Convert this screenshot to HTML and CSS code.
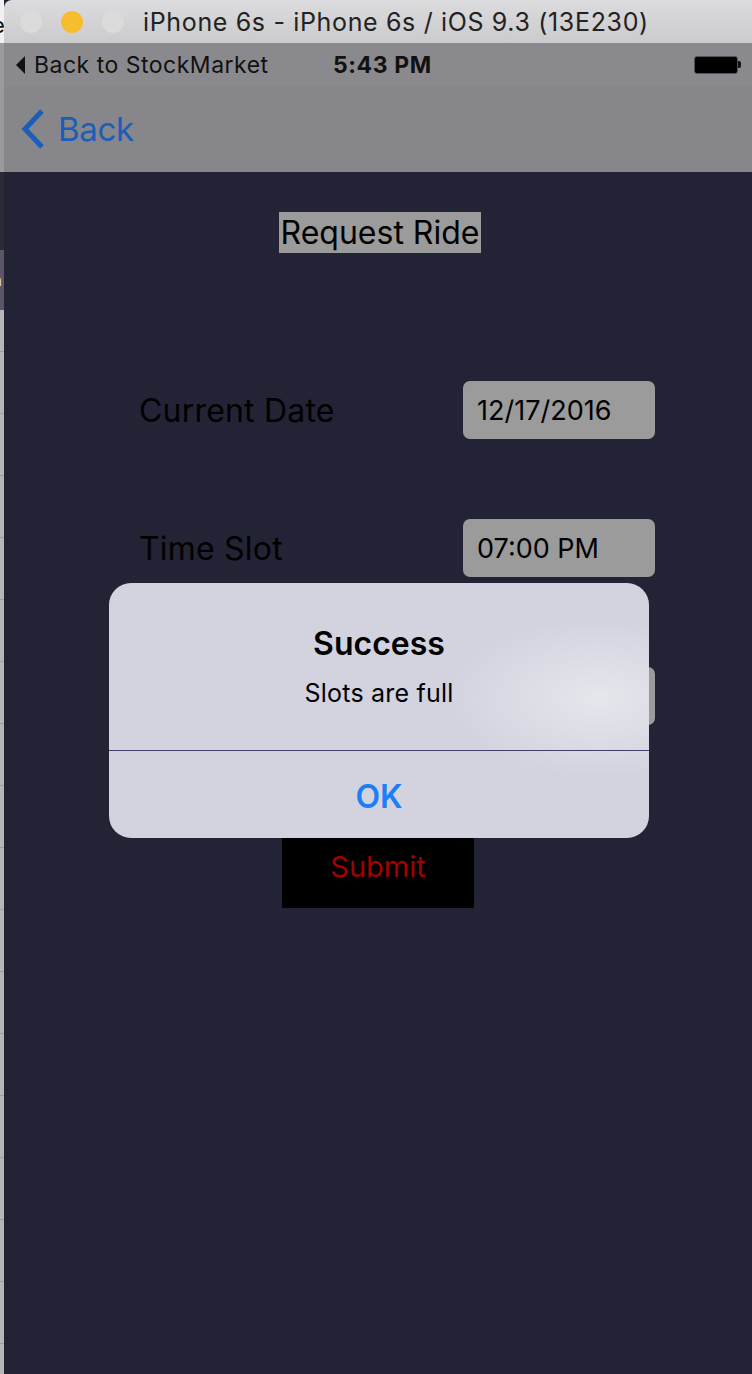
FILE: index.html
```html
<!DOCTYPE html>
<html>
<head>
<meta charset="utf-8">
<link rel="stylesheet" href="styles.css">
</head>
<body>
<div class="desk">
  <div class="behind">
    <div class="b-top"><span class="b-char">e</span></div>
    <div class="b-gray"></div>
    <div class="b-dark"></div>
    <div class="b-purple"><span class="b-char2">a</span></div>
    <div class="b-list"></div>
  </div>
  <div class="sim">
    <div class="titlebar">
      <div class="lights">
        <span class="light gray"></span>
        <span class="light yellow"></span>
        <span class="light gray"></span>
      </div>
      <div class="title">iPhone 6s - iPhone 6s / iOS 9.3 (13E230)</div>
    </div>
    <div class="phone">
      <div class="statusbar">
        <div class="sb-left"><span class="tri"></span>Back to StockMarket</div>
        <div class="sb-time">5:43 PM</div>
        <div class="battery"><span class="bat-body"></span><span class="bat-tip"></span></div>
      </div>
      <div class="navbar">
        <svg class="chev" width="30" height="42" viewBox="0 0 30 42"><path d="M24 3 L7 21 L24 39" fill="none" stroke="#1a5eb8" stroke-width="5"/></svg>
        <span class="back">Back</span>
      </div>
      <div class="content">
        <div class="heading"><span class="heading-label">Request Ride</span></div>
        <div class="form">
          <div class="row r1"><span class="lbl">Current Date</span><span class="box">12/17/2016</span></div>
          <div class="row r2"><span class="lbl">Time Slot</span><span class="box">07:00 PM</span></div>
          <div class="row r3"><span class="lbl"></span><span class="box"></span></div>
          <div class="submit-wrap"><button class="submit">Submit</button></div>
        </div>
        <div class="alert">
          <div class="alert-body">
            <div class="alert-title">Success</div>
            <div class="alert-msg">Slots are full</div>
          </div>
          <div class="alert-btn">OK</div>
        </div>
      </div>
    </div>
  </div>
</div>
</body>
</html>
```

FILE: styles.css
```css
* { box-sizing: border-box; }
html, body { margin: 0; padding: 0; }
body {
  width: 752px;
  height: 1374px;
  overflow: hidden;
  font-family: Inter, "Noto Sans", sans-serif;
  background: #232336;
}
.desk {
  display: flex;
  width: 752px;
  height: 1374px;
}
.behind {
  width: 4px;
  flex: none;
  display: flex;
  flex-direction: column;
  overflow: hidden;
}
.b-top {
  height: 43px;
  background: #f1f1f1;
  position: relative;
}
.b-char {
  position: absolute;
  left: -8px;
  top: 12px;
  font-size: 22px;
  color: #111;
}
.b-gray { height: 129px; background: #9b9a9d; }
.b-dark { height: 78px; background: #2b2b36; }
.b-purple { height: 60px; background: #5b5769; position: relative; }
.b-char2 {
  position: absolute;
  left: -7px;
  top: 20px;
  font-size: 16px;
  color: #ddd;
}
.b-list {
  flex: 1;
  background-color: #b6b6b9;
  background-image: repeating-linear-gradient(to bottom, transparent 0, transparent 41px, #9d9da2 41px, #9d9da2 42px, transparent 42px, transparent 62px);
}
.sim {
  flex: 1;
  display: flex;
  flex-direction: column;
  border-top-left-radius: 8px;
  overflow: hidden;
  background: #232336;
}
.titlebar {
  height: 43px;
  flex: none;
  display: flex;
  align-items: center;
  background: linear-gradient(to bottom, #dcdbdd, #cbcacc);
}
.lights {
  display: flex;
  gap: 19px;
  padding-left: 16px;
}
.light {
  width: 22px;
  height: 22px;
  border-radius: 50%;
  display: block;
}
.light.gray { background: #dbdbdb; }
.light.yellow { background: #f7bd2f; }
.title {
  margin-left: 19px;
  font-size: 25px;
  color: #222;
  letter-spacing: 0.65px;
}
.phone {
  flex: 1;
  display: flex;
  flex-direction: column;
}
.statusbar {
  height: 43px;
  background: #8a898e;
  display: flex;
  align-items: center;
  padding-left: 12px;
  padding-right: 11px;
  font-size: 23px;
  color: #111;
}
.sb-left {
  display: flex;
  align-items: center;
  width: 317px;
  letter-spacing: 0.5px;
}
.tri {
  width: 0;
  height: 0;
  border-top: 9px solid transparent;
  border-bottom: 9px solid transparent;
  border-right: 9px solid #111;
  margin-right: 9px;
}
.sb-time {
  font-weight: 700;
  font-size: 23px;
  letter-spacing: 0.6px;
  flex: 1;
}
.battery {
  display: flex;
  align-items: center;
}
.bat-body {
  width: 44px;
  height: 18px;
  background: #000;
  border: 1.5px solid #555;
  border-radius: 3px;
  display: block;
}
.bat-tip {
  width: 3px;
  height: 7px;
  background: #111;
  border-radius: 0 2px 2px 0;
  display: block;
}
.navbar {
  height: 86px;
  background: #87868b;
  display: flex;
  align-items: center;
  padding-left: 14px;
  padding-bottom: 1px;
}
.chev { display: block; margin-right: 10px; }
.back {
  font-size: 33px;
  color: #1a5eb8;
  letter-spacing: -0.3px;
}
.content {
  flex: 1;
  position: relative;
  background: #232336;
}
.heading {
  display: flex;
  justify-content: center;
  padding-top: 40px;
  padding-left: 4px;
}
.heading-label {
  background: #9b9b9b;
  color: #000;
  font-size: 32px;
  line-height: 41px;
  padding: 0 2px;
}
.form {
  display: flex;
  flex-direction: column;
  padding-top: 128px;
}
.row {
  display: flex;
  justify-content: space-between;
  align-items: center;
  height: 58px;
  margin: 0 97px 0 135px;
}
.r2 { margin-top: 80px; }
.r3 { margin-top: 90px; }
.lbl {
  font-size: 32px;
  color: #000;
  letter-spacing: 0.2px;
}
.box {
  width: 192px;
  height: 58px;
  background: #9b9b9b;
  border-radius: 7px;
  font-size: 27px;
  color: #000;
  display: flex;
  align-items: center;
  padding-left: 14px;
}
.submit-wrap {
  display: flex;
  justify-content: center;
  margin-top: 101px;
}
.submit {
  width: 192px;
  height: 82px;
  background: #000;
  border: none;
  color: #a30000;
  font-family: Inter, "Noto Sans", sans-serif;
  font-size: 29px;
  padding: 0;
  padding-bottom: 2px;
}
.alert {
  position: absolute;
  left: 105px;
  top: 411px;
  width: 540px;
  height: 255px;
  border-radius: 22px;
  overflow: hidden;
  background:
    radial-gradient(ellipse 150px 80px at 490px 115px, rgba(232,232,238,0.9), rgba(232,232,238,0) 100%),
    #d3d3df;
  display: flex;
  flex-direction: column;
}
.alert-body {
  height: 168px;
  border-bottom: 1px solid #3f3f6e;
  display: flex;
  flex-direction: column;
  align-items: center;
  padding-top: 43px;
}
.alert-title {
  font-size: 32px;
  font-weight: 600;
  color: #000;
  line-height: 36px;
}
.alert-msg {
  margin-top: 16px;
  font-size: 25px;
  letter-spacing: 0.2px;
  color: #000;
  line-height: 30px;
}
.alert-btn {
  flex: 1;
  display: flex;
  align-items: center;
  justify-content: center;
  font-size: 32px;
  font-weight: 600;
  color: #1a80f7;
  padding-top: 4px;
}
```
